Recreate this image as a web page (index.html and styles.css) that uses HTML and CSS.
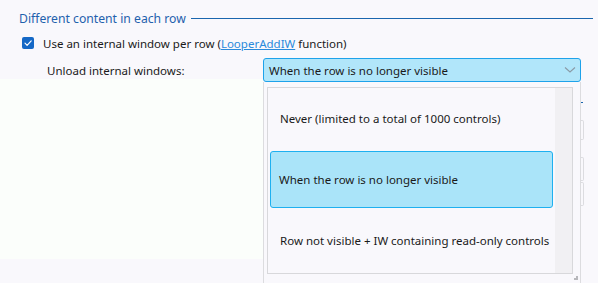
FILE: index.html
```html
<!DOCTYPE html>
<html>
<head>
<meta charset="utf-8">
<link rel="stylesheet" href="styles.css">
</head>
<body>
<div class="page">
  <div class="group-title">
    <span class="title-text">Different content in each row</span>
    <span class="title-line"></span>
  </div>
  <div class="check-row">
    <span class="checkbox">
      <svg width="12" height="12" viewBox="0 0 12 12"><path d="M3 6.2 L5.1 8.3 L9.2 3.9" fill="none" stroke="#fff" stroke-width="1.2" stroke-linecap="round" stroke-linejoin="round"/></svg>
    </span>
    <span class="check-label">Use an internal window per row (<a class="link">LooperAddIW</a> function)</span>
  </div>
  <div class="unload-row">
    <span class="unload-label">Unload internal windows:</span>
    <div class="combo">
      <span class="combo-text">When the row is no longer visible</span>
      <svg class="chevron" width="12" height="8" viewBox="0 0 12 8"><path d="M1 1.5 L6 6 L11 1.5" fill="none" stroke="#8a9aa6" stroke-width="1.1"/></svg>
    </div>
  </div>
  <div class="rest">
    <div class="rest-left"></div>
    <div class="rest-right">
      <span class="edge-line"></span>
      <span class="edge-box e1"></span>
      <span class="edge-box e2"></span>
      <span class="edge-box e3"></span>
    </div>
  </div>
  <div class="dropdown">
    <div class="list">
      <div class="items">
        <div class="item">Never (limited to a total of 1000 controls)</div>
        <div class="item selected">When the row is no longer visible</div>
        <div class="item">Row not visible + IW containing read-only controls</div>
      </div>
      <div class="scroll"></div>
    </div>
    <svg class="grip" width="4" height="4" viewBox="0 0 4 4"><rect x="2" y="0" width="2" height="2" fill="#b8b8bc"/><rect x="0" y="2" width="4" height="2" fill="#b8b8bc"/></svg>
  </div>
</div>
</body>
</html>
```
FILE: styles.css
```css
html, body {
  margin: 0;
  padding: 0;
}
body {
  width: 598px;
  height: 283px;
  overflow: hidden;
  background: #f9f8fc;
  font-family: "Noto Sans", "Segoe UI", sans-serif;
  font-size: 11.5px;
  color: #1a1a1a;
}
.page {
  position: relative;
  display: flex;
  flex-direction: column;
  height: 283px;
}
.group-title {
  display: flex;
  align-items: center;
  height: 20px;
  margin-top: 8px;
  padding-left: 19px;
  padding-right: 5px;
}
.title-text {
  color: #1f61ad;
  font-size: 12.2px;
  white-space: nowrap;
  padding-right: 5px;
}
.title-line {
  flex: 1;
  border-top: 1px solid #1a66ae;
  margin-top: 1px;
}
.check-row {
  display: flex;
  align-items: center;
  height: 20px;
  margin-top: 5px;
  padding-left: 22px;
}
.checkbox {
  width: 12px;
  height: 12px;
  border-radius: 2px;
  background: #1568c6;
  display: flex;
  align-items: center;
  justify-content: center;
  margin-right: 9px;
}
.checkbox svg { display: block; }
.check-label {
  white-space: nowrap;
}
.link {
  color: #2a8adb;
  text-decoration: underline;
}
.unload-row {
  display: flex;
  align-items: center;
  height: 24px;
  margin-top: 5px;
}
.unload-label {
  width: 216px;
  padding-left: 47px;
  white-space: nowrap;
}
.combo {
  width: 311px;
  height: 22px;
  border: 1px solid #1ea2ea;
  border-radius: 3px;
  background: #b1e6fa;
  display: flex;
  align-items: center;
  padding-left: 5px;
  box-sizing: content-box;
}
.combo-text {
  flex: 1;
  white-space: nowrap;
}
.chevron {
  margin-right: 4px;
}
.rest {
  display: flex;
  margin-top: -3px;
}
.rest-left {
  width: 263px;
  height: 180px;
  background: #fbfefb;
}
.rest-right {
  flex: 1;
  position: relative;
}
.edge-line {
  position: absolute;
  left: 318px;
  top: 23px;
  width: 2px;
  height: 1px;
  background: #1a66ae;
}
.edge-box {
  position: absolute;
  left: 318px;
  width: 2px;
  border: 1px solid #dcdce0;
  border-left: none;
  border-radius: 0 2px 2px 0;
}
.e1 { top: 41px; height: 18px; }
.e2 { top: 78px; height: 22px; }
.e3 { top: 103px; height: 22px; }
.dropdown {
  position: absolute;
  left: 263px;
  top: 82px;
  width: 318px;
  height: 201px;
  box-sizing: border-box;
  border-left: 1px solid #dcdcdf;
  border-right: 1px solid #dcdcdf;
  background: #f9f8fc;
  padding: 5px 7px 0 3px;
}
.list {
  display: flex;
  height: 187px;
  border: 1px solid #d8d8db;
  box-sizing: border-box;
  background: #f9f8fc;
}
.items {
  flex: 1;
  min-width: 0;
  display: flex;
  flex-direction: column;
  padding: 0 2px;
}
.item {
  height: 61px;
  flex-shrink: 0;
  display: flex;
  align-items: center;
  padding-left: 9px;
  white-space: nowrap;
  overflow: hidden;
  box-sizing: border-box;
  border: 1px solid transparent;
}
.item.selected {
  height: 57px;
  margin: 2px 0;
  background: #aae4f9;
  border-color: #1eb0f0;
  border-radius: 3px;
  padding-left: 8px;
}
.scroll {
  width: 17px;
  background: #f1f0f3;
}
.grip {
  position: absolute;
  right: 2px;
  bottom: 3px;
}
```
